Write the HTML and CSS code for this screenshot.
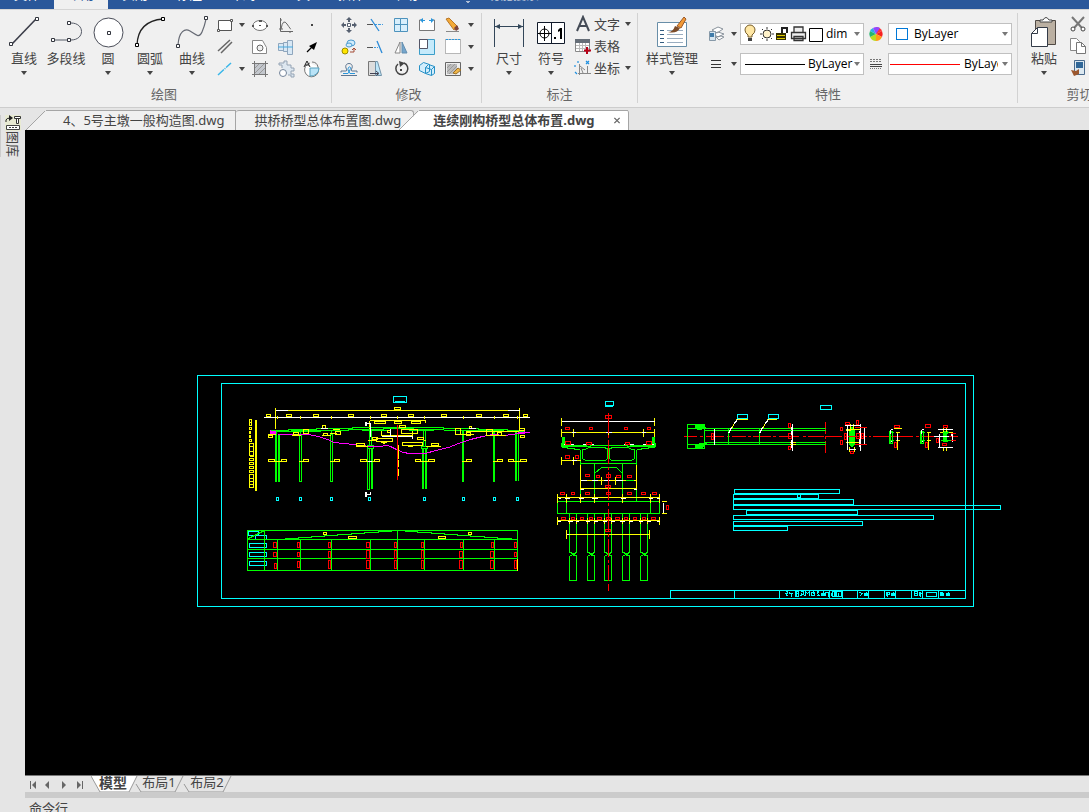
FILE: index.html
```html
<!DOCTYPE html>
<html lang="zh-CN">
<head>
<meta charset="utf-8">
<title>连续刚构桥型总体布置.dwg</title>
<link rel="stylesheet" href="styles.css">
</head>
<body>
<svg class="defs" aria-hidden="true">
  <symbol id="down" viewBox="0 0 6 4"><path d="M0 0h6L3 4z" fill="currentColor"/></symbol>
</svg>

<nav class="menu">
  <a class="menu-tab" href="#">文件</a>
  <a class="menu-tab active" href="#">常用</a>
  <a class="menu-tab" href="#">实用</a>
  <a class="menu-tab" href="#">标注</a>
  <a class="menu-tab" href="#">布局</a>
  <a class="menu-tab" href="#">工具</a>
  <a class="menu-tab" href="#">插件</a>
  <a class="menu-tab" href="#">帮助</a>
  <a class="menu-tab search" href="#"><svg width="6" height="2"><path d="M1 0h4v1H4v1H2V1H1z" fill="#aebdd4"/></svg>功能搜索</a>
</nav>

<header class="ribbon">
  <section class="panel draw">
    <div class="tools">
      <button class="big"><svg width="36" height="36"><path d="M6 31L30 6" stroke="#3a3c48" stroke-width="1.6"/><g fill="#fff" stroke="#33363f"><path d="M3.500 29.500h3v3h-3zM29.500 4.500h3v3h-3z"/></g></svg><span>直线</span><svg class="arrow"><use href="#down"/></svg></button>
      <button class="big"><svg width="36" height="36"><path d="M5 27h18c14 0 14-17 0-17" fill="none" stroke="#555a66"/><path d="M3.500 25.500h3v3h-3zM19.500 25.500h3v3h-3zM19.500 8.500h3v3h-3z" fill="#fff" stroke="#33363f"/></svg><span>多段线</span></button>
      <button class="big"><svg width="36" height="36"><circle cx="18.500" cy="19.500" r="14.500" fill="#fff" stroke="#4a4d58"/><path d="M17.500 18.500h3v3h-3z" fill="#fff" stroke="#33363f"/></svg><span>圆</span><svg class="arrow"><use href="#down"/></svg></button>
      <button class="big"><svg width="36" height="36"><path d="M5 32Q6 8 31 6" fill="none" stroke="#222" stroke-width="1.300"/><path d="M3.500 30.500h3v3h-3zM29.500 4.500h3v3h-3z" fill="#fff" stroke="#000"/></svg><span>圆弧</span><svg class="arrow"><use href="#down"/></svg></button>
      <button class="big"><svg width="36" height="36"><path d="M4 32C5 18 11 15 16 18s9 8 12 1 3-8 4-13" fill="none" stroke="#666a74" stroke-width="1.200"/><path d="M2.500 31.500h3v3h-3zM30.500 3.500h3v3h-3z" fill="#fff" stroke="#33363f"/></svg><span>曲线</span><svg class="arrow"><use href="#down"/></svg></button>
      <div class="grid draw-grid">
        <button aria-label="矩形"><svg width="18" height="18"><path d="M2.500 4.500h13v10h-13z" fill="#fff" stroke="#555"/><path d="M1.500 13.500h2v2h-2zM14.500 3.500h2v2h-2z" fill="#fff" stroke="#555"/></svg></button>
        <button aria-label="更多矩形"><svg class="arrow"><use href="#down"/></svg></button>
        <button aria-label="椭圆"><svg width="18" height="18"><ellipse cx="9" cy="9.500" rx="7" ry="5" fill="#fff" stroke="#777"/><path d="M8 4h3v2H8zM8 9h2v1H8zM1 9h2v2H1zM15 9h2v2h-2z" fill="#555"/></svg></button>
        <button aria-label="函数曲线"><svg width="18" height="18"><path d="M3.500 2v13.500H16M4 13Q6 2 10 8t4 5M3 4h2M2 13h4M13 15v2" fill="none" stroke="#666"/></svg></button>
        <button aria-label="点"><svg width="18" height="18"><path d="M8 8h2v2H8z" fill="#444"/></svg></button>

        <button aria-label="双线"><svg width="18" height="18"><path d="M2 13L14 2M5 15L16 4" stroke="#666" stroke-width="1.500"/></svg></button>
        <span></span>
        <button aria-label="面域"><svg width="18" height="18"><path d="M1.500 2.500h10l4 7v6h-14z" fill="#fff" stroke="#888"/><circle cx="9" cy="10" r="3" fill="#f0f0f0" stroke="#666"/></svg></button>
        <button aria-label="轴"><svg width="18" height="18"><path d="M1.500 5.500h5v7h-5zM6.500 4.500h4v9h-4zM10.500 2.500h5v14h-5z" fill="#d8e8f5" stroke="#8fa6bd"/><path d="M1 9h15" stroke="#45a9df"/></svg></button>
        <button aria-label="箭头"><svg width="18" height="18"><path d="M14 4L11 12 6 8z" fill="#000"/><path d="M9 9l-5 5" stroke="#000" stroke-width="1.300"/></svg></button>

        <button aria-label="构造线"><svg width="18" height="18"><path d="M2 15L15 3" stroke="#38b6e9" stroke-width="1.500" stroke-dasharray="8 1 1 1"/></svg></button>
        <button aria-label="更多构造线"><svg class="arrow"><use href="#down"/></svg></button>
        <button aria-label="填充"><svg width="18" height="18"><path d="M4 4h10v10H4z" fill="#c3c7cd"/><path d="M3.500 1v16M14.500 1v16M1 3.500h16M1 14.500h16" stroke="#777"/><path d="M4 8l4-4M4 13l9-9M8 14l6-6" stroke="#999" fill="none"/></svg></button>
        <button aria-label="零件"><svg width="18" height="18"><path d="M5 8V5H2V3h5V1h3v4h4v3h3v3h-3v3h3v3h-3v-2h-3" fill="#dde7f0" stroke="#94a3b4"/><circle cx="6" cy="13" r="3.500" fill="#fff" stroke="#73849a"/></svg></button>
        <button aria-label="局部图"><svg width="18" height="18"><path d="M7 3a7 7 0 1 0 8 4" fill="#fff" stroke="#777"/><path d="M7 8h9a8 8 0 0 1-9 8z" fill="#b9e3f7" stroke="#58a2bf"/><path d="M1 7l3-6 3 6M2 5h4" fill="none" stroke="#222"/><path d="M9 2q5 0 6 5" fill="none" stroke="#777"/></svg></button>
      </div>
    </div>
    <h2>绘图</h2>
  </section>

  <section class="panel modify">
    <div class="tools">
      <div class="grid modify-grid">
        <button aria-label="移动"><svg width="18" height="18"><path d="M9 1l3 3H6zM9 17l3-3H6zM1 9l3-3v6zM17 9l-3-3v6zM8 4h2v2H8zM8 12h2v2H8zM4 8h2v2H4zM12 8h2v2h-2z" fill="#566070"/><path d="M7.500 7.500h3v3h-3z" fill="#fff" stroke="#566070"/></svg></button>
        <button aria-label="打断"><svg width="18" height="18"><path d="M1 8.500h6" stroke="#555"/><path d="M8 8.500h9" stroke="#3e9be0" stroke-dasharray="3 1"/><path d="M5 3l8 12" stroke="#2c8bd8" stroke-width="1.300"/></svg></button>
        <button aria-label="阵列"><svg width="18" height="18"><path d="M2.500 2.500h6v6h-6zM8.500 2.500h7v6h-7zM8.500 8.500h7v7h-7zM2.500 8.500h6v7h-6z" fill="#d8effc" stroke="#4d93bd"/></svg></button>
        <button aria-label="拉伸"><svg width="18" height="18"><path d="M3 4H1.500v10.500h15V4H15" fill="#fff" stroke="#777"/><path d="M3 4.500h4M11 4.500h4" stroke="#2996dc"/><path d="M5 2l-3 2 3 3M13 2l3 2-3 3" fill="#2996dc"/></svg></button>
        <button aria-label="删除"><svg width="18" height="18"><path d="M2 3l3-1 9 9-4 3z" fill="#f4aa37" stroke="#b97728"/><path d="M10 12l3-3 2 4-3 2z" fill="#7d443d"/><path d="M2 15.500h13" stroke="#888"/></svg></button>
        <button aria-label="更多删除"><svg class="arrow"><use href="#down"/></svg></button>

        <button aria-label="复制"><svg width="18" height="18"><circle cx="5" cy="13" r="3" fill="#ffe500" stroke="#9a8c00"/><ellipse cx="11" cy="5" rx="4" ry="3" fill="#d2ecfb" stroke="#4a9bd0"/><ellipse cx="9" cy="7" rx="3" ry="2" fill="#d2ecfb" stroke="#4a9bd0"/><path d="M10 14h4v-4M12 12l2-2 2 2" fill="none" stroke="#a34b35"/></svg></button>
        <button aria-label="延伸"><svg width="18" height="18"><path d="M1 9.500h6" stroke="#555"/><path d="M8 9.500h4" stroke="#3e9be0" stroke-dasharray="2 1"/><path d="M11 3l5 12" stroke="#2c8bd8" stroke-width="1.300"/></svg></button>
        <button aria-label="镜像"><svg width="18" height="18"><path d="M8 4v11H3z" fill="#fff" stroke="#888"/><path d="M10 4v11h5z" fill="#75a6cd" stroke="#638eaf"/></svg></button>
        <button aria-label="缩放"><svg width="18" height="18"><path d="M1.500 1.500h15v15h-15z" fill="#c5eafb" stroke="#3c9ec9"/><path d="M1.500 1.500h8v9h-8z" fill="#fff" stroke="#556"/></svg></button>
        <button aria-label="分解"><svg width="18" height="18"><path d="M1.500 1.500h15v14h-15z" fill="#fff" stroke="#777" stroke-dasharray="1 1"/><path d="M2 1.500h14" stroke="#2996dc" stroke-dasharray="2 1"/></svg></button>
        <button aria-label="更多分解"><svg class="arrow"><use href="#down"/></svg></button>

        <button aria-label="偏移"><svg width="18" height="18"><path d="M1 15.500h16M1 12.500V11h5q2 0 0-3c-2-6 8-6 6 0q-2 3 0 3h5v1.500" fill="none" stroke="#5d7590"/><path d="M3 13.500h5q2-1 0-4c0-4 4-3 2 0q-2 3 0 4h5" fill="none" stroke="#2996dc"/></svg></button>
        <button aria-label="拔模"><svg width="18" height="18"><path d="M2.500 1.500h7v14h-7z" fill="#ddd" stroke="#777"/><path d="M9.500 1.500h2l4 14h-6z" fill="#bfe7fa" stroke="#7393a8"/><path d="M4 13.500h8M10 11l3 2.500-3 2" fill="none" stroke="#445"/></svg></button>
        <button aria-label="旋转"><svg width="18" height="18"><path d="M6 4a6 6 0 1 0 6-1" fill="none" stroke="#444" stroke-width="1.500"/><path d="M7 1l6 2-5 4zM8 9h2v2H8z" fill="#444"/></svg></button>
        <button aria-label="实体"><svg width="18" height="18"><path d="M1.500 5.500l4-3 6 2v7l-4 2-6-3zM7.500 7.500l3-3 6 2v7l-3 2-6-2zM7.500 7.500l6 2v6M13.500 9.500l3-3" fill="#d2edfc" stroke="#2791c6"/></svg></button>
        <button aria-label="编辑填充"><svg width="18" height="18"><path d="M1.500 2.500h15v13h-15z" fill="#eee" stroke="#666"/><path d="M3 4h10v10H3z" fill="#bbb"/><path d="M3 8l4-4M3 12l8-8M5 14l8-8" stroke="#999"/><path d="M9 13l5-5 3 2-5 4z" fill="#efb548" stroke="#9a6f26"/></svg></button>
        <button aria-label="更多填充"><svg class="arrow"><use href="#down"/></svg></button>
      </div>
    </div>
    <h2>修改</h2>
  </section>

  <section class="panel dims">
    <div class="tools">
      <button class="big"><svg width="36" height="36"><path d="M3.500 6v28M32.500 6v28M4 13.500h28" stroke="#33475a" fill="none"/><path d="M4 13.500l5-2.500v5zM32 13.500l-5-2.500v5z" fill="#33475a"/></svg><span>尺寸</span><svg class="arrow"><use href="#down"/></svg></button>
      <button class="big"><svg width="36" height="36"><path d="M4.500 9.500h27v21h-27zM18.500 9v22" fill="#fff" stroke="#111a2a"/><circle cx="11.500" cy="20.500" r="4.500" fill="none" stroke="#000"/><path d="M5 20.500h13M11.500 13v15" stroke="#000"/><path d="M21 24h2v2h-2zM27 15h2v11h-2v-8l-2 1v-2z" fill="#000"/></svg><span>符号</span><svg class="arrow"><use href="#down"/></svg></button>
      <div class="rows">
        <button class="row"><svg width="18" height="18"><path d="M3 16L9 2l6 14M5 11h8" fill="none" stroke="#444b56" stroke-width="2"/></svg><span>文字</span><svg class="arrow"><use href="#down"/></svg></button>
        <button class="row"><svg width="18" height="18"><path d="M1.500 2.500h14v12h-14z" fill="#fff" stroke="#888"/><path d="M1 2h15v4H1z" fill="#666e78"/><path d="M2 8.500h13M2 11.500h13M5.500 6v8M8.500 6v8M11.500 6v8" stroke="#bbb"/><path d="M13 10v7M10 13.500h7" stroke="#b80016" stroke-width="2"/></svg><span>表格</span></button>
        <button class="row"><svg width="18" height="18"><path d="M5.500 5v11M4 14.500h13M6 7l5 4M13.500 7v8M7 9l2 5" fill="none" stroke="#888"/><path d="M4 2v2M12 2l3 3M15 2l-3 3M1 6v2M1 13l2 2" stroke="#2090e0" stroke-width="1.200"/></svg><span>坐标</span><svg class="arrow"><use href="#down"/></svg></button>
      </div>
    </div>
    <h2>标注</h2>
  </section>

  <section class="panel props">
    <div class="tools">
      <button class="big wide"><svg width="36" height="36"><path d="M3.500 9.500h29v24h-29z" fill="#fff" stroke="#688ea8"/><path d="M6 17.500h4M6 21.500h4M6 25.500h4M6 29.500h4" stroke="#345c80"/><path d="M13 17.500h16M13 21.500h16M13 25.500h16M13 29.500h16" stroke="#9aadc0"/><path d="M23 13l7-9 2 2-5 9z" fill="#f29a37" stroke="#9a5828"/><path d="M14 19q5 0 7-6l5 2q-3 6-12 4z" fill="#7c4b28"/></svg><span>样式管理</span><svg class="arrow"><use href="#down"/></svg></button>
      <div class="prop-grid">
        <button class="drop" aria-label="图层"><svg width="18" height="18"><path d="M5 5l6-3 5 2-6 4zM6 9l5-2 6 2-6 3zM9 12l5-1 3 1-5 3z" fill="#fff" stroke="#8a939c"/><path d="M2.500 6.500h6v9h-6z" fill="#d7e6f0" stroke="#8799a8"/><path d="M3 8h4v4H3z" fill="#407caa"/></svg><svg class="arrow"><use href="#down"/></svg></button>
        <div class="combo layer">
          <svg width="80" height="20"><path d="M4 13v-2Q1 9 1 6a5 5 0 0 1 10 0q0 3-3 5v2z" fill="#ffe7a4" stroke="#775d2a"/><path d="M4 14h4v3H4z" fill="#444"/>
            <circle cx="23" cy="10" r="4" fill="#fff2ca" stroke="#333"/><path d="M23 3v2M23 15v2M16 10h2M28 10h2M18 5l1 1M27 14l1 1M28 5l-1 1M19 14l-1 1" stroke="#333"/>
            <path d="M32 9h10v7H32z" fill="#332f00"/><path d="M33 11.500h8M33 14.500h8" stroke="#ddc900"/><path d="M38 9V4h5v5" fill="none" stroke="#222" stroke-width="2"/>
            <path d="M50 8V3h9v5M47.500 8.500h14v6h-14zM50 12.500h9v4h-9z" fill="#eee" stroke="#333" stroke-width="1.300"/>
            <path d="M65.500 4.500h13v13h-13z" fill="#fff" stroke="#000"/></svg>
          <select aria-label="图层"><option>dim</option></select><svg class="arrow"><use href="#down"/></svg>
        </div>
        <button class="single" aria-label="颜色"><svg width="16" height="16" viewBox="-8 -8 16 16"><path d="M0 0V-7A7 7 0 0 1 6-3z" fill="#f33"/><path d="M0 0l6-3A7 7 0 0 1 6 3z" fill="#f72020"/><path d="M0 0l6 3A7 7 0 0 1 0 7z" fill="#ff9c18"/><path d="M0 0v7A7 7 0 0 1-6 3z" fill="#b8dc20"/><path d="M0 0l-6 3A7 7 0 0 1-6-3z" fill="#25b66e"/><path d="M0 0l-6-3A7 7 0 0 1-3-6z" fill="#2bade5"/><path d="M0 0l-3-6A7 7 0 0 1 4-6z" fill="#9447ff"/></svg></button>
        <div class="combo color"><i class="swatch"></i><select aria-label="颜色"><option>ByLayer</option></select><svg class="arrow"><use href="#down"/></svg></div>

        <button class="drop" aria-label="线宽列表"><svg width="18" height="18"><path d="M4 5.500h10M4 9.500h10M4 12.500h10" stroke="#333"/></svg><svg class="arrow"><use href="#down"/></svg></button>
        <div class="combo line"><i class="stroke black"></i><select aria-label="线宽"><option>ByLayer</option></select><svg class="arrow"><use href="#down"/></svg></div>
        <button class="single" aria-label="线型"><svg width="14" height="12"><path d="M1 1.500h12M1 3.500h12" stroke="#777" stroke-dasharray="2 1"/><path d="M1 6.500h12M1 8.500h12" stroke="#444"/><path d="M1 10.500h12" stroke="#777" stroke-dasharray="1 1"/></svg></button>
        <div class="combo line type"><i class="stroke red"></i><select aria-label="线型"><option>ByLayer</option></select><svg class="arrow"><use href="#down"/></svg></div>
      </div>
    </div>
    <h2>特性</h2>
  </section>

  <section class="panel clip">
    <div class="tools">
      <button class="big"><svg width="36" height="36"><path d="M9.500 7.500h20v24h-20z" fill="#bbb0a2" stroke="#504a45"/><path d="M14 9V7h3q3-5 6 0h3v2z" fill="#fff" stroke="#444"/><path d="M11.500 14.500h10v19h-16v-13z" fill="#fff" stroke="#333b48"/><path d="M5.500 20.500h6v-6" fill="none" stroke="#333b48"/></svg><span>粘贴</span><svg class="arrow"><use href="#down"/></svg></button>
      <div class="rows">
        <button class="row"><svg width="18" height="18"><path d="M3 2l10 11M15 2L5 13" stroke="#777" stroke-width="2"/><circle cx="4" cy="14" r="2" fill="#fff" stroke="#444"/><circle cx="14" cy="14" r="2" fill="#fff" stroke="#444"/></svg><span>剪切</span></button>
        <button class="row"><svg width="18" height="18"><path d="M1.500 1.500h6l3 3v9h-9z" fill="#fff" stroke="#888"/><path d="M7.500 5.500h5l4 4v7h-9z" fill="#fff" stroke="#777"/><path d="M12.500 5.500v4h4" fill="none" stroke="#777"/></svg><span>复制</span></button>
        <button class="row"><svg width="18" height="18"><path d="M5.500 1.500h10v14h-10z" fill="#dce8f0" stroke="#4a6b8d"/><path d="M7 3h7v6H7z" fill="#306798"/><path d="M2 11l5 1 3-2v5l-5 2z" fill="#9b572e"/></svg><span>特性匹配</span></button>
      </div>
    </div>
    <h2>剪切板</h2>
  </section>
</header>

<div class="work">
  <aside class="dock">
    <button class="dock-tab"><svg width="16" height="16"><path d="M0 0h16v16H0z" fill="#e8ead3"/><path d="M1 7V5q0-2 5-2" fill="none" stroke="#222"/><path d="M4 0l4 3-4 3z" fill="#222"/><path d="M9.500 1.500h6v2h-6zM11.500 3.500h2v5h-2z" fill="#fff" stroke="#333"/><path d="M1.500 10.500h13v4h-13z" fill="#fff" stroke="#444"/><path d="M4 12.500h8" stroke="#444" stroke-dasharray="2 1"/></svg><span>图库</span></button>
  </aside>
  <main class="main">
    <nav class="files">
      <a class="file first" href="#"><svg class="slant" width="20" height="20"><path d="M0 20L20 1v19z" fill="#f0f0f0"/><path d="M0 20L19 1" stroke="#a5a5a5"/></svg><span>4、5号主墩一般构造图.dwg</span></a>
      <a class="file second" href="#"><span>拱桥桥型总体布置图.dwg</span></a>
      <a class="file current" href="#"><svg class="slant" width="20" height="20"><path d="M0 20L20 1v19z" fill="#fff"/><path d="M0 20L19 1" stroke="#a5a5a5"/></svg><span>连续刚构桥型总体布置.dwg</span><svg class="close" viewBox="0 0 8 8"><path d="M1 1l6 6M7 1L1 7" stroke="#666" stroke-width="1.500"/></svg></a>
    </nav>

    <div class="canvas">
    <svg class="plan" viewBox="25 130 1064 645" preserveAspectRatio="xMinYMin meet" role="img" aria-label="桥型总体布置图">
      <!-- solid members -->
      <path class="yf" d="M255 420h2v71h-2z"/>
      <path class="gf" d="M275 434h2v48h-2zM278 434h2v48h-2zM371 448h2v41h-2zM422 448h2v41h-2zM425 448h2v41h-2zM462 430h2v52h-2zM493 430h2v52h-2zM515 432h2v49h-2z"/>
      <path class="gf" d="M562 437h3v6l3 2v2h-7v-4h1zM652 437h3v6h1v4h-7v-2l3-2z"/>
      <path class="gf" d="M695 425h8l4 4h-5v1h-5l-2-2zM695 448h8l4-5h-7l-5 2z"/>
      <path class="gf" d="M849 430l2-3h2l2 3v14l-2 3h-2l-2-3zM943 431h5v2l-1 1v5l1 3h-5z"/>
      <path class="mf" d="M270 430h7v5h-7zM518 430h7v4h-7z"/>
      <g transform="translate(.5 .5)" fill="none">
        <!-- frames and title block -->
        <path class="c" d="M197 375h776v231H197zM221 383h744v215H221zM670 598v-8h295M734 590v8M779 590v8M829 590v8M842 590v8M857 590v8M868 590v8M884 590v8M895 590v8M911 590v8M922 590v8M938 590v8M832 591h9v5h-9zM926 592h10v4h-10z"/>
        <path class="c" d="M785 591h2v2h-2l2 2h-2M789 591v2h3M791 592v4M795 591h3v5h-3zM796 591v4M795 593h3M800 591h3v3l-3 1M801 592v3M803 595h1M805 595v-4l2 2 2-2v4M811 592h3v3h-3zM813 590v3M816 591h2l-1 2 2 2h-3M821 593h3v2h-3zM822 593v2M823 590v4M825 595v-3h2M828 591v5M831 592v3M834 592h2v3h-2zM835 592v3M838 592v3M859 592l3 1-3 3M864 593h3v2h-3zM865 593v2M866 591v4M886 592h3v2h-3zM887 592v4M886 592v3M891 593h3v2h-3zM892 592v3M893 591v4M914 591h3v4h-3zM914 593h3M919 591v4M920 591v5M918 593h4M940 592h2v3h-2zM941 592v3M946 593h3v2h-3zM947 592v3M948 591v4M943 592v3"/>

        <!-- notes -->
        <path class="c" d="M734 489h105v4H734zM733 494h85v4h-85zM797 494h3v3h-3zM733 499h120v5H733zM733 505h267v4H733zM746 510h111v4H746zM733 515h200v4H733zM733 521h129v4H733zM733 526h54v4h-54z"/>

        <!-- elevation: level scale -->
        <path class="y" d="M249 419h2v3h-2zM249 422h2v3h-2zM249 427h2v2h-2zM249 431h1v2h-1zM249 435h1v2h-1zM249 439h2v2h-2zM249 443h4v3h-4zM249 446h4v5h-4zM249 451h4v4h-4zM249 458h4v2h-4zM249 462h4v2h-4zM249 466h4v2h-4zM249 470h4v2h-4zM249 474h4v4h-4zM249 478h4v3h-4zM249 481h4v3h-4zM249 484h4v3h-4zM249 456h4"/>
        <!-- elevation: dimension chains -->
        <path class="y" d="M287 410h220M275 407v21M519 407v20M394 407h6v2h-6zM369 420h56v2M369 420v16M374 421h11v2h-11zM394 421h7v2h-7zM411 421h9v2h-9zM266 414h4v2h-4zM286 414h5v2h-5zM313 414h5v2h-5zM348 414h5v2h-5zM381 414h5v2h-5zM408 414h5v2h-5zM441 414h5v2h-5zM476 414h5v2h-5zM503 414h5v2h-5zM523 414h4v2h-4z"/>
        <path class="w" d="M275 410h12M507 410h12M263 417h266"/>
        <path class="y" d="M277 415v3M300 415v3M331 415v3M370 415v3M397 415v3M424 415v3M463 415v3M494 415v3M517 415v3"/>
        <path class="c" d="M393 396h13v6h-13zM394 401h10"/>
        <!-- elevation: girder and piers -->
        <path class="g" d="M270 430h18v-1h28v-1h36v-1h91v1h35v1h29v1h17M275 431h45v-1h28v-1h35v-1h30v1h20M433 429h10v-1h10M443 430h60v1h20M361 430h25M408 430h25M386 427h27M290 430h30"/>
        <path class="g" d="M299 434h2v47h-2zM330 434h2v47h-2zM300 429v5M331 429v5M367 448h2v41h-2zM369 430v15M371 430v15M367 445h6v3h-6zM423 430v16M425 430v16M421 446h6v2h-6zM518 433v47M276 431v4"/>
        <path class="m" d="M277 434h31l10 2 12 4 3 2 10 1 10 1 7 1 10 1h8l9-1 3 1 6 3 7 3 6 1h16l10-3 13-3 10-4 12-4 12-3 10-2 13 1 5-1 10-1 10-1"/>
        <!-- elevation: labels -->
        <path class="y" d="M268 459h6v2h-6zM281 459h5v2h-5zM274 461h7M298 461h5M303 459h5v2h-5zM329 461h5M334 459h5v2h-5zM360 459h6v2h-6zM366 461h8M374 459h5v2h-5zM415 459h5v2h-5zM420 461h8M428 459h6v2h-6zM461 461h5M466 459h5v2h-5zM492 461h5M497 459h5v2h-5zM508 459h5v2h-5zM513 461h7M520 459h6v2h-6z"/>
        <path class="y" d="M376 438h16v3h-16zM402 442h20v3h-20zM417 437h6v2h-6zM431 443h7v2h-7zM401 429h16v4h-16zM399 425h6v2h-6zM381 430v5h31v-5M356 443h8v2h-8zM355 446h12M293 432h5v2h-5zM303 429h5v4h-5zM291 435h9M322 425h3v3h-3zM323 433h4v2h-4zM321 435h9M335 431h5v3h-5zM329 433h7M332 429h7M455 428h5v6h-5zM460 434h13M466 432h4v3h-4zM469 426h2v2h-2zM486 429h6v6h-6zM497 432h4v3h-4zM492 435h13M519 428h5v2h-5zM520 435h4v2h-4zM465 431h53M268 435h4v2h-4zM267 434h8M372 437h5v2h-5zM367 440h9M380 442h6M382 443h2M407 446h5M423 440h2M425 446h15M387 430h3v2h-3z"/>
        <path class="w" d="M381 436h31v2M320 428h7M468 428h7M390 428v7M367 461h4"/>
        <path class="w" d="M365 421v4M366 421v4M366 423h4v8M370 423v13M365 491v5M366 491v5M366 494h4v-3"/>
        <path class="r" d="M397 424v55"/>
        <path class="y" d="M398 444v14M398 459v7M398 468v7"/>
        <path class="c" d="M276 497h2v3h-2zM299 497h2v3h-2zM330 497h2v3h-2zM368 497h2v3h-2zM423 497h2v3h-2zM462 497h2v3h-2zM493 497h2v3h-2zM516 497h2v3h-2z"/>

        <!-- data table -->
        <path class="c" d="M248 531h10v4h-10zM255 535h11v4h-11zM249 543h17v4h-17zM249 552h17v4h-17zM249 561h17v4h-17z"/>
        <path class="g" d="M247 530h270v40H247zM247 539h270M247 549h270M247 558h270M264 530v40M277 539v31M300 539v31M331 539v31M370 539v31M397 530v40M424 539v31M463 539v31M494 539v31M248 538l16-8M284 538h14v-1h13v-1h13v-1h13v-1h14v-1h13v-1h14v-1h13M404 531h13v1h14v1h13v1h13v1h13v1h14v1h13v1h14"/>
        <path class="y" d="M323 532h3v2h-3zM348 536h8v2h-8zM438 536h7v2h-7zM468 532h3v2h-3zM517 558v12"/>
        <path class="r" d="M273 542h3v5h-3zM297 542h2v5h-2zM328 542h2v5h-2zM366 542h3v5h-3zM394 542h2v5h-2zM421 542h2v5h-2zM460 542h2v5h-2zM491 542h2v5h-2zM514 542h2v5h-2zM273 552h3v4h-3zM297 552h2v4h-2zM328 551h2v6h-2zM366 550h3v8h-3zM394 550h2v8h-2zM421 550h2v8h-2zM459 551h3v6h-3zM490 551h3v6h-3zM514 552h2v4h-2zM274 563h2v5h-2zM297 561h2v6h-2zM328 560h2v8h-2zM366 560h3v8h-3zM394 560h2v8h-2zM421 560h2v8h-2zM459 560h3v8h-3zM490 560h3v8h-3zM514 560h2v8h-2z"/>

        <!-- cross section -->
        <path class="c" d="M605 401h8v4h-8zM604 406h8M604 405h8"/>
        <path class="g" d="M561 447h6v1h7v1h5l1 1v51M654 447h-6v1h-7v1h-4l-1 1v51M561 446h29v-1h37v1h27M567 445h19M629 445h19M582 449v9l3 2h20l2-2v-10l-4-1h-14l-5 2zM634 449v9l-3 2h-20l-2-2v-10l4-1h14l5 2zM580 463h56M594 463v38M594 473l7-6h15l6 6M622 463v38"/>
        <path class="g" d="M557 501h102v12H557zM566 501v12M650 501v12M569 513v39l4 1 3-1M576 513v39M569 556v24h7v-25h-4M587 513v39l4 1 3-1M594 513v39M587 556v24h7v-25h-4M604 513v39l4 1 3-1M611 513v39M604 556v24h7v-25h-4M622 513v39l4 1 3-1M629 513v39M622 556v24h7v-25h-4M640 513v39l4 1 3-1M647 513v39M640 556v24h7v-25h-4M569 556l3-2 4-1M587 556l3-2 4-1M604 556l3-2 4-1M622 556l3-2 4-1M640 556l3-2 4-1"/>
        <path class="y" d="M561 417v8M654 417v8M561 432h93M561 428v8M573 428v8M608 428v8M643 428v8M654 428v8M561 460h19M561 456v8M573 456v8M580 464v25M636 464v25M580 480h56M601 476v8M615 476v8M580 488h56M557 497h102M557 493v9M566 493v9M580 493v9M594 493v9M622 493v9M650 493v9M659 493v9M557 520h102M557 516v8M659 516v8M569 517v6M576 517v6M587 517v6M594 517v6M604 517v6M611 517v6M622 517v6M629 517v6M640 517v6M647 517v6M566 534h83M566 529v9M649 529v9M661 501h5M661 513h5"/>
        <path class="w" d="M561 421h93M571 432h4M605 432h6M641 432h4M571 460h5M580 480h6M591 480h6M603 480h6M615 480h7M663 502v10M558 498h2M564 498h5M578 498h5M591 498h6M620 498h5M648 498h4M656 498h3M557 521h3M567 521h5M575 521h3M585 521h4M593 521h4M602 521h4M610 521h4M619 521h5M628 521h4M638 521h4M646 521h4M656 521h3M580 489h3M633 489h3M566 534h2M563 444h10M582 444h11M623 444h10M642 444h11"/>
        <path class="g" d="M625 480h8"/>
        <path class="r" d="M608 412v20M608 434v3M608 439v24M608 466v3M608 471v28M608 502v3M608 508v22M608 533v3M608 538v18M608 559v3M608 564v16M608 583v7"/>
        <path class="r" d="M605 415h6v3h-6zM565 427h4v2h-4zM589 427h3v2h-3zM624 427h3v2h-3zM647 427h3v2h-3zM565 441h5v3h-5zM586 442h5v2h-5zM625 442h4v2h-4zM646 441h5v3h-5zM565 455h4v3h-4zM575 455h3v3h-3zM585 474h4v2h-4zM596 475h3v2h-3zM606 474h4v3h-4zM616 475h4v2h-4zM627 475h4v2h-4zM605 485h5v2h-5zM560 492h4v2h-4zM571 492h3v2h-3zM585 492h4v2h-4zM606 492h4v2h-4zM627 492h4v2h-4zM641 492h4v2h-4zM652 492h4v2h-4zM666 505h2v4h-2zM561 517h4v2h-4zM571 517h3v2h-3zM580 517h3v2h-3zM589 517h3v2h-3zM597 517h4v2h-4zM606 517h4v2h-4zM615 517h4v2h-4zM624 517h3v2h-3zM633 517h3v2h-3zM642 517h3v2h-3zM651 517h4v2h-4zM605 529h5v2h-5z"/>

        <!-- plan -->
        <path class="r" d="M683 436h13M699 436h3M705 436h18M726 436h3M731 436h14M747 436h3M752 436h18M772 436h3M778 436h20M802 436h3M807 436h16M825 436h16M844 436h22M868 436h2M872 436h40M915 436h3M920 436h37M825 421v12M825 435v3M825 440v12"/>
        <path class="g" d="M687 424h17v24h-17zM687 428h138M704 430h121M704 442h121M687 444h138M728 428v16M759 428v16"/>
        <path class="r" d="M711 433h2v6h-2zM788 423h2v4h-2zM788 433h3v5h-3zM788 446h2v3h-2z"/>
        <path class="y" d="M729 431l8-13M760 431l8-13M737 419h10M768 419h8M789 442h6M789 444h6"/>
        <path class="w" d="M714 428v16M792 423v27M791 426v3M791 430v4M791 439v4M791 444v3M728 433l3-6M733 424l4-5M759 433l3-6M764 424l4-5"/>
        <path class="c" d="M737 414h10v4h-10zM768 414h10v4h-10zM820 405h11v4h-11zM819 409h10"/>

        <!-- pier sections -->
        <path class="y" d="M845 429h15M845 430h5M845 442h15M850 423v5M853 423v5M849 446v5M854 446v5"/>
        <path class="w" d="M844 425h16M847 425v24M860 423v27M864 427v17M859 430v4M859 438v8M848 449h7"/>
        <path class="r" d="M845 422h4v2h-4zM856 420h2v4h-2zM840 427h2v3h-2zM840 440h2v4h-2zM844 433h2v6h-2zM856 433h3v5h-3zM861 433h2v5h-2zM850 451h3v2h-3zM854 427h12M854 444h12"/>
        <path class="g" d="M889 431h3v12h-3zM890 431v12M888 432h5M888 440h5M920 431h3v12h-3zM921 431v12M919 432h5M919 440h5M940 432h10M940 440h10"/>
        <path class="y" d="M897 432v17M895 432h4M895 440h4M893 428h8M928 432v17M926 432h4M926 440h4M943 427v4M946 427v4M943 446v4M946 446v4M939 432h3M948 432h4"/>
        <path class="w" d="M890 433v-3l3-2M897 433v7M890 441h1M921 433v-3l3-2M921 441h1M933 436h15M937 429h15M939 433v14M952 432v9M951 432v3M937 447h15"/>
        <path class="r" d="M894 425h5v2h-5zM894 442h2v5h-2zM925 424h5v3h-5zM925 442h2v5h-2zM943 425h4v2h-4zM936 438h2v4h-2zM942 443h4v2h-4zM950 433h5M950 440h5"/>
      </g>
    </svg>
    </div>

    <nav class="sheets">
      <svg class="pager" width="60" height="12"><path d="M2.500 2v8M54.500 2v8" stroke="#666"/><path d="M8 2v8L4 6zM21 2v8l-4-4zM34 2v8l4-4zM49 2v8l4-4z" fill="#666"/></svg>
      <div class="sheet-list">
        <a class="sheet model" href="#"><svg width="49" height="17"><path d="M0 0l9 16h29l8-16z" fill="#fff"/><path d="M0 0l9 16h29l8-16" fill="none" stroke="#999"/></svg><span>模型</span></a>
        <a class="sheet" href="#"><svg width="49" height="17"><path d="M1 8l5 8h34l8-16" fill="none" stroke="#999"/></svg><span>布局1</span></a>
        <a class="sheet" href="#"><svg width="49" height="17"><path d="M1 8l5 8h34l8-16" fill="none" stroke="#999"/></svg><span>布局2</span></a>
      </div>
    </nav>
    <div class="splitter"></div>
    <div class="command">命令行</div>
  </main>
</div>
</body>
</html>
```
FILE: styles.css
```css
* { box-sizing: border-box; }
body {
  margin: 0;
  height: 100vh;
  display: flex;
  flex-direction: column;
  overflow: hidden;
  background: #e5e5e5;
  color: #444;
  font: 13px/18px "Noto Sans", "Noto Sans CJK SC", sans-serif;
}
a { color: inherit; text-decoration: none; }
button {
  padding: 0;
  border: 0;
  background: none;
  color: inherit;
  font: inherit;
}
svg { display: block; flex: none; }
.defs { position: absolute; width: 0; height: 0; }
.arrow { width: 6px; height: 4px; color: #444; }

.menu {
  display: flex;
  flex: none;
  height: 9px;
  overflow: hidden;
  background: #2a579a;
}
.menu-tab {
  display: flex;
  align-items: flex-end;
  justify-content: center;
  width: 54px;
  height: 3px;
  flex: none;
  line-height: 18px;
  color: #fff;
}
.menu-tab.active { height: 9px; padding-bottom: 6px; background: #f0f0f0; color: #2a579a; }
.menu-tab.search { width: 140px; gap: 16px; color: #aebdd4; }

.ribbon {
  display: flex;
  flex: none;
  height: 99px;
  padding: 3px 0 4px;
  overflow: hidden;
  background: #f0f0f0;
  border-top: 1px solid #d5d5d5;
  border-bottom: 1px solid #cdcdcd;
}
.panel {
  display: flex;
  flex: none;
  flex-direction: column;
  justify-content: space-between;
  border-right: 1px solid #d2d2d2;
}
.panel h2 {
  margin: 0;
  font-size: 13px;
  font-weight: 400;
  line-height: 18px;
  text-align: center;
  color: #666;
}
.tools { display: flex; }
.draw { width: 332px; padding-left: 3px; }
.modify { width: 150px; padding-left: 4px; }
.dims { width: 156px; padding-left: 6px; }
.props { width: 380px; padding-left: 7px; }
.clip { width: 132px; padding-left: 5px; }
.draw h2, .dims h2, .props h2 { padding-right: 6px; }
.big {
  display: flex;
  flex-direction: column;
  align-items: center;
  width: 42px;
  height: 66px;
  white-space: nowrap;
}
.big.wide { width: 54px; }
.big .arrow { margin-top: 4px; }
.grid { display: grid; grid-auto-rows: 22px; padding-top: 1px; }
.grid button { display: grid; place-items: center; }
.draw-grid { grid-template-columns: 24px 10px 26px 26px 26px; }
.modify-grid { grid-template-columns: repeat(5, 26px) 10px; }
.rows { display: grid; grid-auto-rows: 22px; justify-items: start; }
.row { display: flex; align-items: center; gap: 2px; white-space: nowrap; padding-left: 2px; }
.row .arrow { margin-left: 3px; }
.clip .rows { padding-left: 2px; }

.prop-grid {
  display: grid;
  grid-template-columns: 33px 124px 24px 124px;
  grid-auto-rows: 22px;
  row-gap: 8px;
  padding: 10px 0 0 8px;
}
.drop { display: flex; align-items: center; gap: 6px; }
.single { display: grid; place-items: center; }
.combo {
  display: flex;
  align-items: center;
  min-width: 0;
  padding: 0 3px;
  overflow: hidden;
  background: #fff;
  border: 1px solid #c0c0c0;
}
.combo select {
  flex: 1;
  min-width: 0;
  padding: 0 0 0 3px;
  border: 0;
  appearance: none;
  background: none;
  color: #000;
  font: 12px/18px "Open Sans", "Noto Sans", sans-serif;
}
.combo .arrow { color: #777; }
.layer select { padding-left: 2px; }
.swatch { width: 12px; height: 12px; margin: 0 3px 0 4px; background: #fff; border: 1px solid #0078d7; }
.stroke { flex: none; width: 60px; height: 1px; margin-left: 1px; background: #000; }
.stroke.red { width: 70px; margin: 0 0 0 -2px; background: #f00; }
.type select { padding-left: 4px; margin-right: 4px; }

.work { display: flex; flex: 1; min-height: 0; }
.dock { flex: none; width: 25px; padding-top: 7px; }
.dock-tab {
  display: flex;
  flex-direction: column;
  align-items: center;
  width: 24px;
  height: 42px;
  border-left: 1px solid #ccc;
}
.dock-tab span { writing-mode: vertical-rl; text-orientation: sideways; line-height: 14px; }
.main { display: flex; flex: 1; flex-direction: column; min-width: 0; }

.files { display: flex; flex: none; align-items: flex-end; height: 22px; padding-left: 1px; overflow: hidden; }
.file { display: flex; height: 20px; white-space: nowrap; }
.file span { height: 20px; line-height: 18px; background: #f0f0f0; border-top: 1px solid #a5a5a5; }
.first span { padding: 0 10px 0 17px; border-right: 1px solid #a5a5a5; }
.second span { padding: 0 12px 0 19px; border-radius: 3px 3px 0 0; border-right: 1px solid #a5a5a5; }
.file.current { position: relative; margin-left: -15px; font-weight: 700; background: linear-gradient(90deg, transparent 20px, #fff 20px); border-right: 1px solid #a5a5a5; border-radius: 0 3px 0 0; }
.current span { padding: 0 18px 0 14px; background: #fff; }
.close { height: 20px; width: 15px; padding: 6px 7px 6px 0; border-top: 1px solid #a5a5a5; }

.canvas { flex: 1; min-height: 0; background: #000; }
.plan { width: 100%; height: 100%; shape-rendering: crispEdges; }
.c { stroke: #0ff; }
.y { stroke: #ff0; }
.g { stroke: #0f0; }
.r { stroke: #f00; }
.w { stroke: #fff; }
.m { stroke: #f0f; }
.yf { fill: #ff0; }
.gf { fill: #0f0; }
.mf { fill: #f0f; }

.sheets { display: flex; flex: none; height: 17px; padding-left: 3px; border-top: 1px solid #777; }
.pager { margin-top: 3px; }
.sheet-list { display: flex; padding-left: 3px; }
.sheet { display: grid; grid-template-columns: 100%; width: 48px; height: 16px; line-height: 13px; white-space: nowrap; }
.sheet svg, .sheet span { grid-area: 1 / 1; }
.sheet span { justify-self: center; }
.sheet.model { width: 44px; font-size: 14px; font-weight: 700; }
.splitter { flex: none; height: 6px; background: #cbcbcb; }
.command { flex: none; height: 14px; padding: 1px 0 0 4px; overflow: hidden; }
```
